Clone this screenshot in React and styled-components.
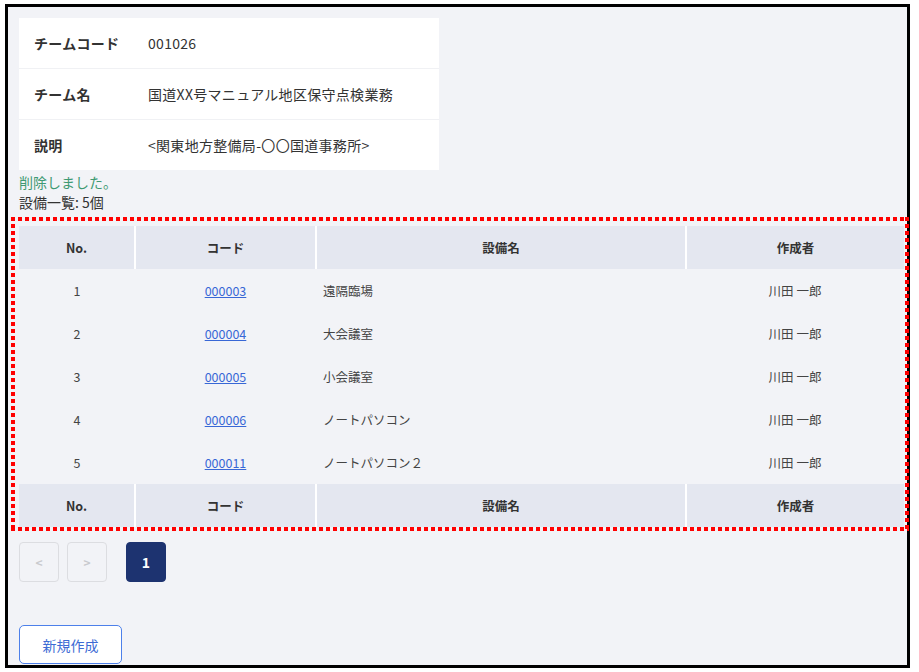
import styled, { createGlobalStyle } from "styled-components";

const GlobalStyle = createGlobalStyle`
  html, body {
    margin: 0;
    padding: 0;
    background: #ffffff;
  }
  body {
    font-family: "Noto Sans CJK JP", "Noto Sans", sans-serif;
    color: #333333;
  }
`;

const Frame = styled.div`
  box-sizing: border-box;
  width: 905px;
  height: 664px;
  margin: 4px 0 0 5px;
  border: 3px solid #000000;
  background: #f2f3f7;
  padding: 11px 0 0 11px;
  display: flex;
  flex-direction: column;
  align-items: flex-start;
`;

const InfoCard = styled.div`
  width: 420px;
  background: #ffffff;
  display: flex;
  flex-direction: column;
`;

const InfoRow = styled.div`
  display: flex;
  align-items: center;
  height: 50px;
  font-size: 14px;
  letter-spacing: 0.3px;
  border-top: ${(p) => (p.first ? "none" : "1px solid #f0f1f4")};
`;

const InfoLabel = styled.div`
  width: 114px;
  padding-left: 15px;
  font-weight: 700;
  color: #333333;
`;

const InfoValue = styled.div`
  color: #333333;
`;

const Message = styled.div`
  font-size: 14px;
  line-height: 20px;
  color: ${(p) => p.color || "#333333"};
  margin-top: ${(p) => p.top || 0}px;
`;

const ListArea = styled.div`
  position: relative;
  margin-top: 14px;

  /* dotted red frame drawn over the list */
  &::after {
    content: "";
    position: absolute;
    top: -9px;
    left: -8px;
    right: -5px;
    bottom: -4px;
    pointer-events: none;
    background:
      repeating-linear-gradient(90deg, #ff0000 0 4px, transparent 4px 7px) top left / 100% 4px no-repeat,
      repeating-linear-gradient(90deg, #ff0000 0 4px, transparent 4px 7px) bottom left / 100% 4px no-repeat,
      repeating-linear-gradient(180deg, #ff0000 0 4px, transparent 4px 7px) top left / 4px 100% no-repeat,
      repeating-linear-gradient(180deg, #ff0000 0 4px, transparent 4px 7px) top right / 4px 100% no-repeat;
  }
`;

const Table = styled.table`
  width: 885px;
  border-collapse: collapse;
  font-size: 12.5px;
  table-layout: fixed;
`;

const HeadCell = styled.th`
  height: 43px;
  padding: 0;
  background: #e4e7f0;
  font-weight: 700;
  color: #333333;
  text-align: center;
  border-left: 2px solid #ffffff;
  &:first-child {
    border-left: none;
  }
`;

const Cell = styled.td`
  height: 43px;
  padding: 0 ${(p) => (p.left ? "7px" : "0")};
  text-align: ${(p) => (p.left ? "left" : "center")};
  color: #444444;
`;

const CodeLink = styled.a`
  color: #3867d6;
  text-decoration: underline;
`;

const Pager = styled.div`
  display: flex;
  gap: 8px;
  margin-top: 15px;
`;

const PageButton = styled.button`
  box-sizing: border-box;
  width: 40px;
  height: 40px;
  border-radius: 4px;
  font-family: inherit;
  font-size: ${(p) => (p.active ? "14px" : "12px")};
  font-weight: 700;
  margin-left: ${(p) => (p.active ? "11px" : "0")};
  border: 1px solid ${(p) => (p.active ? "#1d3370" : "#dcdde1")};
  background: ${(p) => (p.active ? "#1d3370" : "transparent")};
  color: ${(p) => (p.active ? "#ffffff" : "#c9cace")};
  padding: 0;
`;

const CreateButton = styled.button`
  box-sizing: border-box;
  margin-top: 43px;
  width: 103px;
  height: 39px;
  border: 1px solid #4d80ea;
  border-radius: 5px;
  background: #ffffff;
  color: #3d6bd4;
  font-family: inherit;
  font-size: 14px;
  padding: 0;
`;

const info = [
  ["チームコード", "001026"],
  ["チーム名", "国道XX号マニュアル地区保守点検業務"],
  ["説明", "<関東地方整備局-〇〇国道事務所>"],
];

const equipment = [
  { no: 1, code: "000003", name: "遠隔臨場", author: "川田 一郎" },
  { no: 2, code: "000004", name: "大会議室", author: "川田 一郎" },
  { no: 3, code: "000005", name: "小会議室", author: "川田 一郎" },
  { no: 4, code: "000006", name: "ノートパソコン", author: "川田 一郎" },
  { no: 5, code: "000011", name: "ノートパソコン２", author: "川田 一郎" },
];

const HeaderRow = () => (
  <tr>
    <HeadCell>No.</HeadCell>
    <HeadCell>コード</HeadCell>
    <HeadCell>設備名</HeadCell>
    <HeadCell>作成者</HeadCell>
  </tr>
);

const App = () => (
  <>
    <GlobalStyle />
    <Frame>
      <InfoCard>
        {info.map(([label, value], i) => (
          <InfoRow key={label} first={i === 0}>
            <InfoLabel>{label}</InfoLabel>
            <InfoValue>{value}</InfoValue>
          </InfoRow>
        ))}
      </InfoCard>
      <Message color="#3f9a73" top={2}>削除しました。</Message>
      <Message>設備一覧: 5個</Message>
      <ListArea>
        <Table>
          <colgroup>
            <col style={{ width: 116 }} />
            <col style={{ width: 181 }} />
            <col style={{ width: 370 }} />
            <col style={{ width: 218 }} />
          </colgroup>
          <thead>
            <HeaderRow />
          </thead>
          <tbody>
            {equipment.map((row) => (
              <tr key={row.code}>
                <Cell>{row.no}</Cell>
                <Cell>
                  <CodeLink href="#">{row.code}</CodeLink>
                </Cell>
                <Cell left>{row.name}</Cell>
                <Cell>{row.author}</Cell>
              </tr>
            ))}
          </tbody>
          <tfoot>
            <HeaderRow />
          </tfoot>
        </Table>
      </ListArea>
      <Pager>
        <PageButton disabled>&lt;</PageButton>
        <PageButton disabled>&gt;</PageButton>
        <PageButton active>1</PageButton>
      </Pager>
      <CreateButton>新規作成</CreateButton>
    </Frame>
  </>
);

export default App;
